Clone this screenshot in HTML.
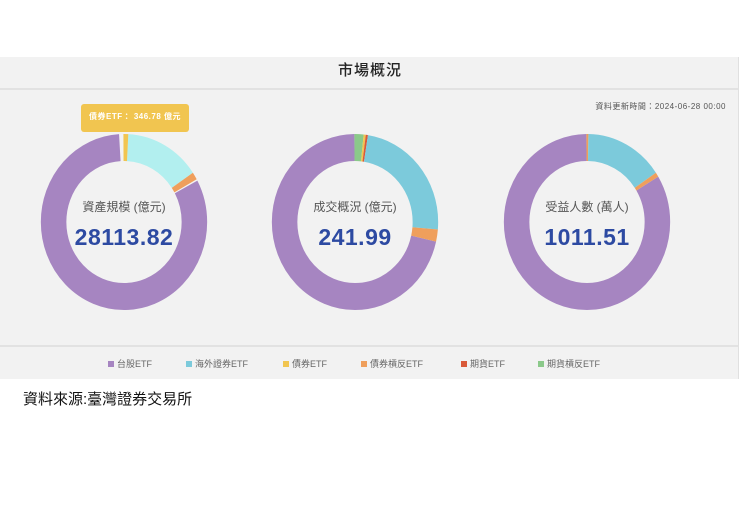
<!DOCTYPE html>
<html><head><meta charset="utf-8"><style>
body{margin:0;width:740px;height:512px;background:#fff;position:relative;overflow:hidden;font-family:"Liberation Sans","Noto Sans CJK TC",sans-serif}
.panel{position:absolute;left:0;top:57px;width:738px;height:322px;background:#f2f2f2;border-right:1px solid #e0e0e0}
.title{position:absolute;top:59px;left:0;width:740px;text-align:center;font-size:15px;color:#222;letter-spacing:1px;font-weight:500}
.hl{position:absolute;left:0;width:738px;height:2px;background:#e2e2e2}
.upd{position:absolute;right:14px;top:101px;font-size:8px;color:#555;letter-spacing:.5px}
.tip{position:absolute;left:81px;top:104px;width:108px;height:28px;background:#f1c550;border-radius:3px;color:#fff;font-size:8px;font-weight:bold;line-height:26px;text-align:center;letter-spacing:.5px}
.lbl{position:absolute;width:180px;text-align:center;font-size:12px;color:#555}
.num{position:absolute;width:180px;text-align:center;font-size:23px;font-weight:bold;color:#2d4aa2;letter-spacing:.5px}
.legend{position:absolute;top:357px;left:0;width:740px;font-size:9px;color:#666}
.legend span{position:absolute;white-space:nowrap}
.legend i{display:inline-block;width:6px;height:6px;margin-right:3px}
.src{position:absolute;left:23px;top:388px;font-size:15px;color:#111}
</style></head><body>
<div class="panel"></div>
<div class="title">市場概況</div>
<div class="hl" style="top:88px"></div>
<div class="hl" style="top:345px"></div>
<div class="upd">資料更新時間：2024-06-28 00:00</div>
<svg width="740" height="512" style="position:absolute;left:0;top:0">
<g fill="none" stroke-width="27">
 <g transform="translate(124,222) scale(0.945,1) rotate(-90)">
  <circle r="74.5" pathLength="360" stroke="#a685c1" stroke-dasharray="0 62 295 3"/>
  <circle r="74.5" pathLength="360" stroke="#b2efef" stroke-dasharray="0 3 53 304"/>
  <circle r="74.5" pathLength="360" stroke="#ef9f5c" stroke-dasharray="0 56 5 299"/>
  <circle r="74.5" pathLength="360" stroke="#f1c550" stroke-dasharray="3 357"/>
 </g>
 <g transform="translate(355,222) scale(0.945,1) rotate(-90)">
  <circle r="74.5" pathLength="360" stroke="#a685c1" stroke-dasharray="0 103 257 0"/>
  <circle r="74.5" pathLength="360" stroke="#8bc98a" stroke-dasharray="6 354"/>
  <circle r="74.5" pathLength="360" stroke="#f1c550" stroke-dasharray="0 6 1.5 352.5"/>
  <circle r="74.5" pathLength="360" stroke="#d95a3a" stroke-dasharray="0 7.5 1.5 351"/>
  <circle r="74.5" pathLength="360" stroke="#7ccadb" stroke-dasharray="0 9 86 265"/>
  <circle r="74.5" pathLength="360" stroke="#ef9f5c" stroke-dasharray="0 95 8 257"/>
 </g>
 <g transform="translate(587,222) scale(0.945,1) rotate(-90)">
  <circle r="74.5" pathLength="360" stroke="#a685c1" stroke-dasharray="0 59 301 0"/>
  <circle r="74.5" pathLength="360" stroke="#ef9f5c" stroke-dasharray="1 359"/>
  <circle r="74.5" pathLength="360" stroke="#7ccadb" stroke-dasharray="0 1 55 304"/>
  <circle r="74.5" pathLength="360" stroke="#ef9f5c" stroke-dasharray="0 56 3 301"/>
 </g>
</g>
</svg>
<div class="tip">債券ETF： 346.78 億元</div>
<div class="lbl" style="left:34px;top:198px">資產規模 (億元)</div>
<div class="num" style="left:34px;top:224px">28113.82</div>
<div class="lbl" style="left:265px;top:198px">成交概況 (億元)</div>
<div class="num" style="left:265px;top:224px">241.99</div>
<div class="lbl" style="left:497px;top:198px">受益人數 (萬人)</div>
<div class="num" style="left:497px;top:224px">1011.51</div>
<div class="legend">
 <span style="left:108px"><i style="background:#a685c1"></i>台股ETF</span>
 <span style="left:186px"><i style="background:#7ccadb"></i>海外證券ETF</span>
 <span style="left:283px"><i style="background:#f1c550"></i>債券ETF</span>
 <span style="left:361px"><i style="background:#ef9f5c"></i>債券槓反ETF</span>
 <span style="left:461px"><i style="background:#d95a3a"></i>期貨ETF</span>
 <span style="left:538px"><i style="background:#8bc98a"></i>期貨槓反ETF</span>
</div>
<div class="src">資料來源:臺灣證券交易所</div>
</body></html>
